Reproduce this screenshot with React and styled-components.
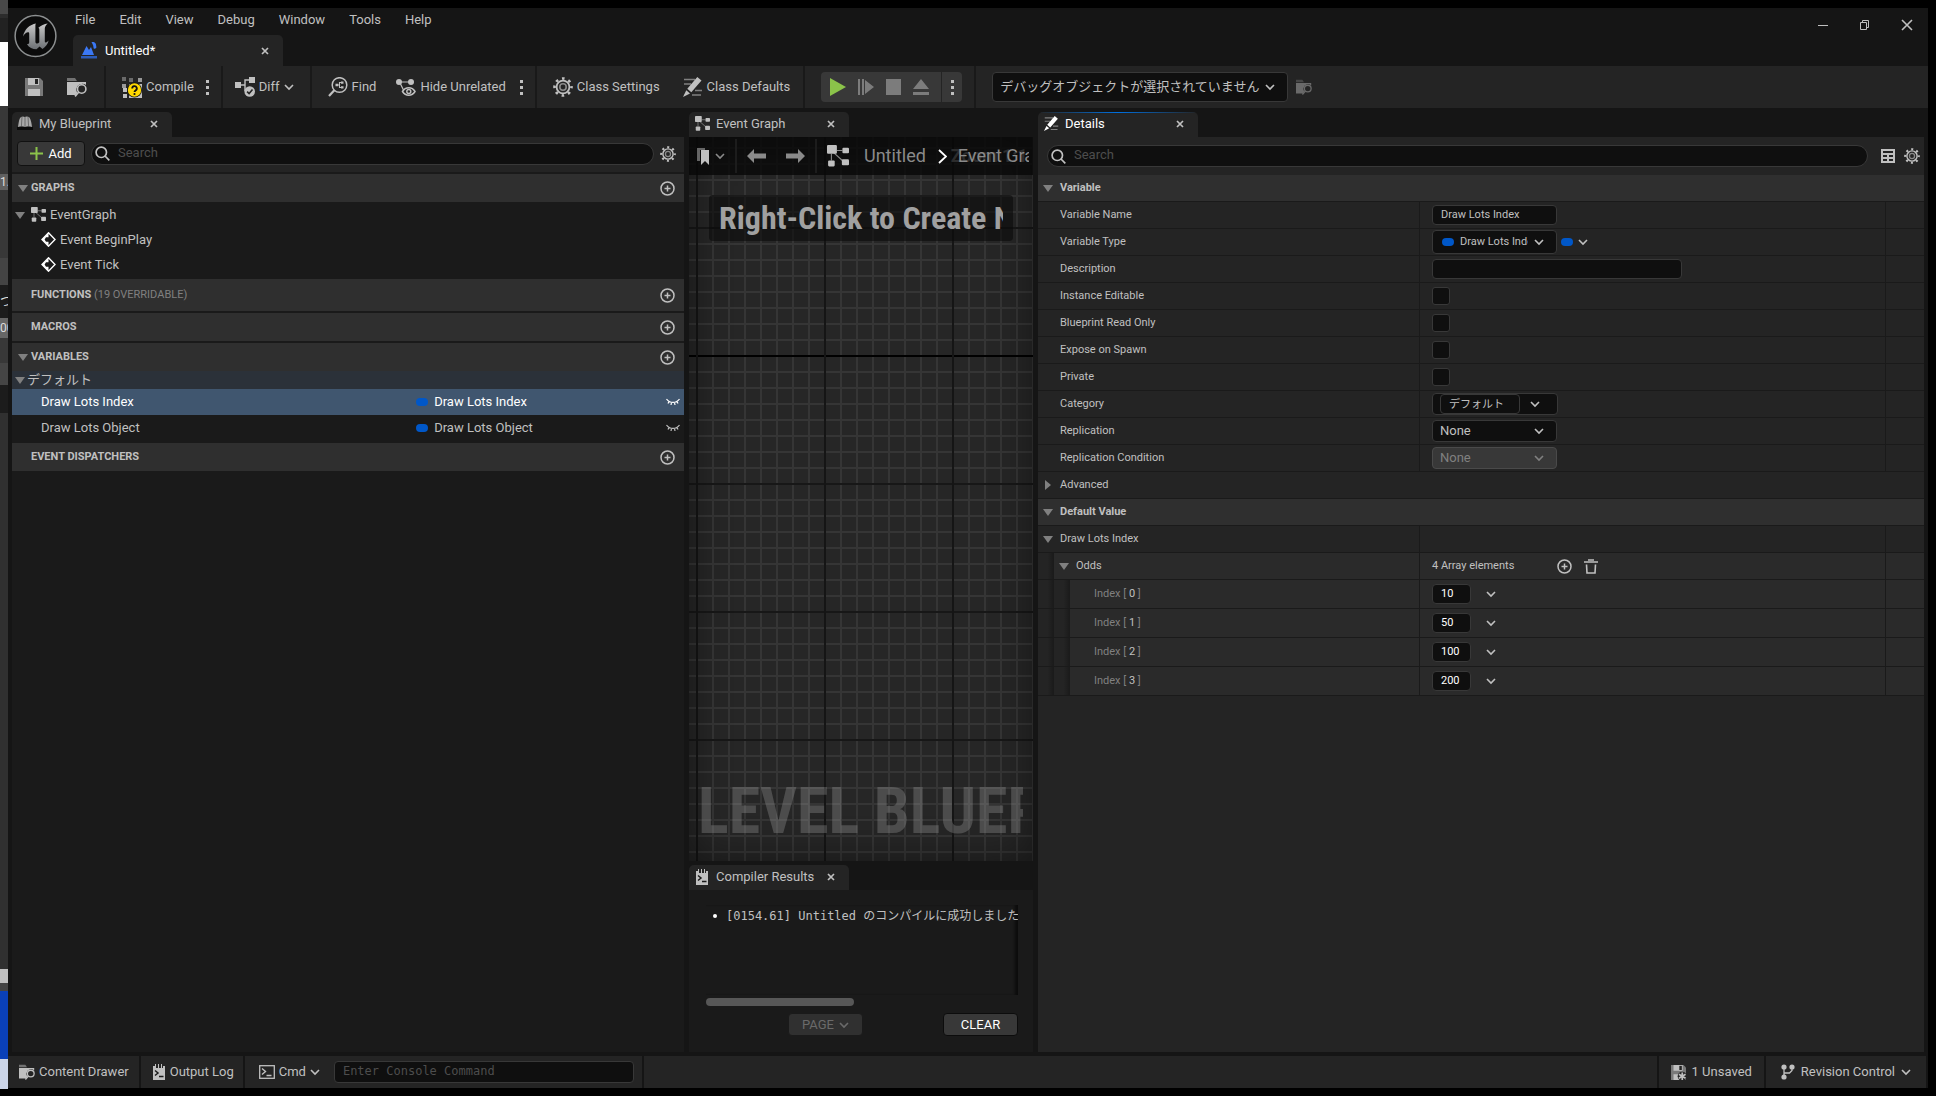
import React from 'react';
import styled, { createGlobalStyle, css } from 'styled-components';

const GlobalStyle = createGlobalStyle`
  * {
    box-sizing: border-box;
  }

  body {
    margin: 0;
    background: #000;
    color: #c0c0c0;
    font-family: Roboto, "Noto Sans CJK JP", sans-serif;
    font-size: 13px;
    line-height: 16px;
  }

  button, input, select {
    font: inherit;
    color: inherit;
    margin: 0;
  }

  svg {
    display: block;
    flex: none;
  }
`;

// --- Desktop and window ---
const Desktop = styled.div`
  display: grid;
  grid-template-columns: 8px minmax(0, 1fr) 8px;
  height: 100vh;
  overflow: hidden;
`;

const BackWindow = styled.div`
  display: flex;
  flex-direction: column;
  overflow: hidden;
  margin-bottom: 7px;
`;

const BackSlice = styled.div`
  flex: ${props => (props.$grow ? '1 1 0' : `0 0 ${props.$h}px`)};
  display: flex;
  align-items: center;
  overflow: hidden;
  background: ${props => props.$bg};
  color: #ddd;
  font-size: 12px;
  white-space: nowrap;
`;

const Window = styled.div`
  display: flex;
  flex-direction: column;
  min-width: 0;
  margin: 8px 0;
  background: #151515;
`;

// --- Title bar ---
const TitleBar = styled.header`
  display: flex;
  height: 58px;
`;

const Logo = styled.div`
  width: 65px;
  padding: 6px;
`;

const TitleMain = styled.div`
  flex: 1;
  display: flex;
  flex-direction: column;
  justify-content: space-between;
`;

const MenuBar = styled.nav`
  display: flex;
  height: 24px;
  padding-left: 2px;
  gap: 24px;
`;

const PlainButton = styled.button`
  display: flex;
  align-items: center;
  padding: 0;
  border: 0;
  background: none;
  white-space: nowrap;
  gap: ${props => props.$gap || 0}px;
`;

const WindowButtons = styled.div`
  display: flex;
  align-items: flex-start;
  gap: 30px;
  padding: 11px 15px 0 0;
`;

// --- Tabs ---
const TabStrip = styled.div`
  display: flex;
  padding-top: ${props => (props.$flush ? 0 : 4)}px;
`;

const TabItem = styled.div`
  display: flex;
  align-items: center;
  gap: ${props => (props.$large ? 8 : 6)}px;
  height: ${props => (props.$large ? 31 : 25)}px;
  width: ${props => (props.$large ? 210 : 160)}px;
  padding: 0 14px ${props => (props.$large ? 0 : 2)}px ${props => (props.$large ? 8 : 5)}px;
  border-radius: 5px 5px 0 0;
  background: #242424;
  color: ${props => (props.$active ? '#fff' : '#c0c0c0')};
  ${props => props.$lit && css`
    background: linear-gradient(90deg, #242424, #0070e0 50%, #242424) top / 100% 1px no-repeat, #242424;
  `}
`;

const TabIcon = styled.i`
  display: flex;
  justify-content: center;
  width: 16px;
`;

const TabTitle = styled.span`
  flex: 1;
  white-space: nowrap;
`;

// --- Main toolbar ---
const Toolbar = styled.div`
  display: flex;
  align-items: center;
  height: 42px;
  background: #242424;
`;

const ToolGroup = styled.div`
  display: flex;
  align-items: center;
  align-self: stretch;
  gap: ${props => props.$gap || 0}px;
  padding: 0 ${props => props.$right || 12}px 0 ${props => props.$left || 16}px;
  border-right: 2px solid ${props => (props.$last ? 'transparent' : '#191919')};
`;

const ToolPair = styled.div`
  display: flex;
  align-items: center;
  gap: ${props => props.$gap}px;
`;

const PlayGroup = styled.div`
  display: flex;
  align-items: center;
  gap: 12px;
  height: 30px;
  padding: 0 8px;
  border-radius: 4px;
  background: #383838;
`;

const PlayMore = styled(PlainButton)`
  align-self: stretch;
  padding-left: 8px;
  border-left: 1px solid #242424;
`;

const SelectBox = styled.div`
  display: grid;
  grid-template-columns: minmax(0, 1fr) 10px;
  align-items: center;
  width: ${props => props.$w}px;
  height: ${props => props.$h}px;
  padding-right: 12px;
  border: 1px solid ${props => (props.$disabled ? '#4a4a4a' : '#383838')};
  border-radius: 4px;
  background: ${props => (props.$disabled ? '#383838' : '#0f0f0f')};
  color: ${props => (props.$disabled ? '#808080' : '#c0c0c0')};
  font-size: 13px;

  select {
    grid-area: 1 / 1 / 2 / 3;
    width: 100%;
    height: 100%;
    padding: 0 12px 0 7px;
    border: 0;
    background: none;
    appearance: none;
    opacity: 1;
  }

  svg {
    grid-area: 1 / 2;
    pointer-events: none;
  }
`;

// --- Panels ---
const Workspace = styled.main`
  flex: 1;
  display: grid;
  grid-template-columns: 672fr 344fr 886fr;
  gap: 5px;
  min-height: 0;
  padding: 0 4px;
`;

const Panel = styled.section`
  display: flex;
  flex-direction: column;
  min-width: 0;
  min-height: 0;
`;

const PanelBody = styled.div`
  flex: 1;
  min-height: 0;
  overflow: hidden;
  background: ${props => props.$bg || '#1a1a1a'};
`;

const PanelTools = styled.div`
  display: flex;
  align-items: center;
  gap: ${props => props.$gap}px;
  height: ${props => props.$h}px;
  padding: ${props => props.$pad};
  background: #242424;
`;

const AddButton = styled.button`
  display: flex;
  align-items: center;
  justify-content: center;
  gap: 5px;
  width: 68px;
  height: 25px;
  border: 1px solid #111;
  border-radius: 4px;
  background: #383838;
  color: #fff;
`;

const SearchBox = styled.label`
  flex: 1;
  display: flex;
  align-items: center;
  gap: 8px;
  height: 22px;
  padding: 0 3px;
  border: 1px solid #383838;
  border-radius: 11px;
  background: #0f0f0f;

  input {
    flex: 1;
    min-width: 0;
    padding: 0 0 2px;
    border: 0;
    outline: 0;
    background: none;
  }

  input::placeholder {
    color: #4d4d4d;
    opacity: 1;
  }
`;

// --- My Blueprint ---
const SectionHeader = styled.div`
  display: flex;
  align-items: center;
  height: ${props => (props.$tall ? 34 : 30)}px;
  padding: 0 9px 0 4px;
  border-top: 2px solid #1a1a1a;
  background: #2f2f2f;
  font-size: 11px;
  font-weight: 700;

  h2 {
    flex: 1;
    margin: 0;
    padding: 0 0 1px 1px;
    font: inherit;
  }

  small {
    color: #808080;
    font-size: 11px;
    font-weight: 400;
  }
`;

const ArrowSlot = styled.span`
  display: flex;
  justify-content: center;
  width: 14px;
`;

const TreeRow = styled.div`
  display: flex;
  align-items: center;
  gap: 4px;
  height: 25px;
  padding-left: ${props => (props.$child ? 29 : 1)}px;
`;

const CategoryRow = styled.div`
  display: flex;
  align-items: center;
  height: 18px;
  padding-left: 1px;
  background: #2b3139;
`;

const VariableRow = styled.div`
  display: grid;
  grid-template-columns: 60% minmax(0, 1fr) 18px;
  align-items: center;
  height: 26px;
  background: ${props => (props.$selected ? '#40566f' : 'transparent')};
  color: ${props => (props.$selected ? '#fff' : '#c0c0c0')};

  > span:first-child {
    padding-left: 29px;
  }
`;

const TypeCell = styled.span`
  display: flex;
  align-items: center;
  gap: 6px;
  padding-left: 1px;
`;

const Pill = styled.i`
  flex: none;
  width: 12px;
  height: 8px;
  border-radius: 4px;
  background: #0057c8;
`;

// --- Event graph ---
const Graph = styled.div`
  flex: 1;
  display: flex;
  flex-direction: column;
  justify-content: space-between;
  min-height: 0;
  overflow: hidden;
  background:
    repeating-linear-gradient(90deg, transparent 0 7px, #151515 7px 9px, transparent 9px 128px),
    linear-gradient(#000, #000) 0 218px / 100% 2px no-repeat,
    repeating-linear-gradient(transparent 0 90px, #171717 90px 92px, transparent 92px 128px),
    repeating-linear-gradient(90deg, transparent 0 7px, #353535 7px 9px, transparent 9px 16px),
    repeating-linear-gradient(transparent 0 10px, #353535 10px 12px, transparent 12px 16px),
    #262626;
  box-shadow: inset 0 0 40px rgba(0, 0, 0, 0.45);
`;

const GraphBar = styled.div`
  display: flex;
  align-items: center;
  height: 38px;
  padding: 0 4px 0 8px;
  background: rgba(8, 8, 8, 0.8);
  color: #8a8a8a;
  overflow: hidden;
`;

const GraphDivider = styled.i`
  flex: none;
  width: 2px;
  height: 34px;
  margin: 0 10px;
  background: #1c1c1c;
`;

const Crumbs = styled.div`
  display: flex;
  align-items: center;
  flex: 1;
  min-width: 0;
  margin-left: 15px;
  overflow: hidden;
  font-size: 18px;
  line-height: 24px;
  white-space: nowrap;

  > svg {
    margin: 0 4px 0 12px;
    color: #fff;
  }
`;

const CrumbEnd = styled.div`
  display: grid;
  flex: 1;
  min-width: 0;
  overflow: hidden;

  > * {
    grid-area: 1 / 1;
  }

  > :first-child {
    color: #2c2c2c;
  }

  > :last-child {
    padding-left: 7px;
  }
`;

const Hint = styled.p`
  margin: 20px 20px auto;
  padding: 0 10px;
  border-radius: 4px;
  background: rgba(10, 10, 10, 0.6);

  span {
    display: block;
    overflow: hidden;
    color: #a0a0a0;
    font: 700 32px/46px "Roboto Condensed", "Liberation Sans Narrow", Roboto, sans-serif;
    white-space: nowrap;
  }
`;

const Watermark = styled.p`
  margin: 0 10px 11px 9px;
  overflow: hidden;
  color: rgba(160, 160, 160, 0.32);
  font: 700 64px/76px "Roboto Condensed", "Liberation Sans Narrow", Roboto, sans-serif;
  white-space: nowrap;
`;

// --- Compiler results ---
const Results = styled.div`
  display: flex;
  flex-direction: column;
  height: 162px;
  padding: 15px 15px 16px 17px;
  background: #1a1a1a;
`;

const Log = styled.ul`
  flex: 1;
  margin: 0;
  padding: 3px 0 0 7px;
  overflow: hidden;
  list-style: none;
  box-shadow: inset -4px 0 3px -1px #0c0c0c;
  font-family: "DejaVu Sans Mono", "Noto Sans CJK JP", monospace;
  font-size: 12px;
  white-space: nowrap;

  li {
    display: flex;
    align-items: center;
    gap: 9px;
  }

  li::before {
    content: '';
    flex: none;
    width: 4px;
    height: 4px;
    border-radius: 2px;
    background: #fff;
  }
`;

const ScrollThumb = styled.div`
  width: 148px;
  height: 8px;
  margin: 3px 0 7px;
  border-radius: 4px;
  background: #575757;
`;

const ResultActions = styled.div`
  display: flex;
  justify-content: space-between;
  padding-left: 82px;
`;

const ActionButton = styled.button`
  display: flex;
  align-items: center;
  justify-content: center;
  gap: 5px;
  width: 75px;
  height: 23px;
  padding: 0;
  border: 1px solid ${props => (props.disabled ? '#1a1a1a' : '#0c0c0c')};
  border-radius: 4px;
  background: ${props => (props.disabled ? '#303030' : '#383838')};
  color: ${props => (props.disabled ? '#6a6a6a' : '#fff')};
`;

// --- Details ---
const PropertyHeader = styled.h2`
  display: flex;
  align-items: center;
  gap: 7px;
  height: 27px;
  margin: 0;
  padding-left: 5px;
  border-bottom: 1px solid #1a1a1a;
  background: ${props => (props.$plain ? '#242424' : '#2f2f2f')};
  font-size: 11px;
  font-weight: ${props => (props.$plain ? 400 : 700)};
`;

const PropertyRow = styled.div`
  display: grid;
  grid-template-columns: 43% minmax(0, 1fr) 39px;
  height: ${props => (props.$tall ? 29 : 27)}px;
  border-bottom: 1px solid #1a1a1a;
  background: ${props => (props.$depth ? '#2a2a2a' : '#242424')};
  font-size: 11px;
`;

const NameCell = styled.div`
  display: flex;
  align-items: center;
  gap: 7px;
  padding-left: ${props => (props.$open ? 5 : 22)}px;
`;

const Nested = styled(NameCell)`
  padding-left: 0;

  em {
    color: #808080;
    font-style: normal;
  }
`;

const Indent = styled.i`
  align-self: stretch;
  width: 16px;
  margin-right: ${props => (props.$leaf ? 17 : -2)}px;
  background: linear-gradient(90deg, #242424 60%, #1a1a1a);

  & + & {
    margin-left: -5px;
  }
`;

const ValueCell = styled.div`
  display: flex;
  align-items: center;
  gap: ${props => props.$gap || 4}px;
  padding-left: 12px;
  border-left: 1px solid #1a1a1a;
`;

const EndCell = styled.div`
  border-left: 1px solid #1a1a1a;
`;

const TextField = styled.input`
  width: ${props => props.$w}px;
  height: 20px;
  padding: 0 7px 2px 8px;
  border: 1px solid #383838;
  border-radius: 4px;
  outline: 0;
  background: #0f0f0f;
  color: ${props => (props.$bright ? '#fff' : '#c0c0c0')};
`;

const CheckBox = styled.input`
  appearance: none;
  width: 18px;
  height: 18px;
  border: 1px solid #383838;
  border-radius: 3px;
  background: #0f0f0f;
`;

const TypeButton = styled.button`
  display: flex;
  align-items: center;
  gap: 6px;
  width: 125px;
  height: 24px;
  padding: 0 12px 0 9px;
  border: 1px solid #383838;
  border-radius: 4px;
  background: #0f0f0f;

  span {
    flex: 1;
    overflow: hidden;
    text-align: left;
    white-space: nowrap;
  }
`;

const ComboBox = styled.div`
  display: flex;
  align-items: center;
  gap: 10px;
  width: 126px;
  height: 22px;
  padding-left: 7px;
  border: 1px solid #383838;
  border-radius: 4px;
  background: #0f0f0f;
`;

const ArrayCount = styled.span`
  width: 113px;
`;

// --- Status bar ---
const StatusBar = styled.footer`
  display: flex;
  height: 32px;
  margin-top: 4px;
  background: #242424;
`;

const StatusItem = styled.div`
  display: flex;
  align-items: center;
  gap: 14px;
  padding: 0 ${props => props.$right || 10}px 0 ${props => props.$left || 10}px;
  border-right: 2px solid #151515;
`;

const Spacer = styled.div`
  flex: 1;
  border-right: 2px solid #151515;
`;

const ConsoleInput = styled.input`
  width: 300px;
  height: 22px;
  padding: 0 8px 3px;
  border: 1px solid #383838;
  border-radius: 4px;
  outline: 0;
  background: #0f0f0f;
  font-family: "DejaVu Sans Mono", monospace;
  font-size: 12px;

  &::placeholder {
    color: #4d4d4d;
    opacity: 1;
  }
`;

// --- Icons ---
const Icon = ({ w = 16, h = w, box = `0 0 ${w} ${h}`, children, ...rest }) => (
  <svg width={w} height={h} viewBox={box} fill="currentColor" aria-hidden="true" {...rest}>{children}</svg>
);

const Chevron = () => (
  <Icon w={10} fill="none" stroke="currentColor" strokeWidth="1.6"><path d="M1 3l4 4 4-4" /></Icon>
);

const Close = () => (
  <Icon w={8} fill="none" stroke="#c0c0c0" strokeWidth="1.7"><path d="M1 1l6 6M7 1L1 7" /></Icon>
);

const Dots = () => (
  <Icon w={4} h={16}>
    <rect x="1" y="1" width="3" height="3" />
    <rect x="1" y="7" width="3" height="3" />
    <rect x="1" y="13" width="3" height="3" />
  </Icon>
);

const Triangle = ({ closed }) => (
  <Icon w={10} color="#808080"><path d={closed ? 'M2 0l6 5-6 5z' : 'M0 2h10L5 9z'} /></Icon>
);

const CirclePlus = () => (
  <Icon w={15} fill="none" stroke="currentColor" strokeWidth="1.5">
    <circle cx="7.5" cy="7.5" r="6.5" />
    <path d="M7.5 4.5v6M4.5 7.5h6" />
  </Icon>
);

const SearchIcon = () => (
  <Icon w={15} fill="none" stroke="currentColor" strokeWidth="1.7">
    <circle cx="6.3" cy="6.3" r="5.2" />
    <path d="M10 10l4.3 4.3" />
  </Icon>
);

const Gear = ({ size = 16 }) => (
  <Icon w={size} box="0 0 20 20" fill="none" stroke="currentColor">
    <circle cx="10" cy="10" r="6.4" strokeWidth="1.8" />
    <circle cx="10" cy="10" r="3.2" strokeWidth="1.6" opacity="0.65" />
    <circle cx="10" cy="10" r="8.5" strokeWidth="2.6" strokeDasharray="2.6 4.076" strokeDashoffset="1.3" />
  </Icon>
);

const SaveIcon = ({ size = 18, star }) => (
  <Icon w={size} box="0 0 18 18">
    <path d="M0 0h15l3 3v15H0z" opacity="0.55" />
    <path d="M3 0h11v7H3zM3 11h12v7H3z" />
    <rect x="10" y="1" width="3" height="5" fill="#242424" />
    {star && (
      <g>
        <circle cx="13.5" cy="13.5" r="5.5" fill="#242424" />
        <path d="M13.5 9v9M9.5 11.2l8 4.6M17.5 11.2l-8 4.6" stroke="currentColor" strokeWidth="2" />
      </g>
    )}
  </Icon>
);

const BrowseIcon = ({ size = 20, ...rest }) => (
  <Icon w={size} box="0 0 20 20" {...rest}>
    <path d="M0 1h8l2 3H0z" opacity="0.5" />
    <path d="M0 5h19v3a6 6 0 0 0-8.6 8L8.5 18H0z" />
    <circle cx="14.7" cy="12" r="5" fill="#242424" />
    <circle cx="14.7" cy="12" r="4.2" fill="none" stroke="currentColor" strokeWidth="1.6" />
    <path d="M11.8 15L8 19.4" stroke="currentColor" strokeWidth="1.7" />
  </Icon>
);

const CompileIcon = () => (
  <Icon w={20} h={21}>
    <path d="M0 0h4v4H0zM7 1h4v4H7z" opacity="0.45" />
    <path d="M16 1h4v4h-4zM0 7h4v4H0z" opacity="0.75" />
    <path d="M1 11h4v4H1zM1 17h4v4H1zM7 7h13v14H7z" />
    <circle cx="12.5" cy="13" r="7.5" fill="#111" />
    <circle cx="12.5" cy="13" r="6.7" fill="#ffd800" />
    <path d="M10.2 11.4a2.3 2.3 0 1 1 3.4 2c-.8.5-1.1.8-1.1 1.6" fill="none" stroke="#111" strokeWidth="1.8" />
    <circle cx="12.5" cy="17" r="1.1" fill="#111" />
  </Icon>
);

const DiffIcon = () => (
  <Icon w={20}>
    <path d="M0 5h6v6H0zM14 0h6v6h-6z" />
    <path d="M6 8h4M10 14V3h4" fill="none" stroke="currentColor" strokeWidth="1.4" />
    <circle cx="14.7" cy="14.5" r="5.3" />
    <path d="M12.1 14.6l2 2 3.4-4" fill="none" stroke="#242424" strokeWidth="1.6" />
  </Icon>
);

const FindIcon = () => (
  <Icon w={20} fill="none" stroke="currentColor" strokeWidth="1.5">
    <circle cx="11.5" cy="8" r="7.3" />
    <path d="M6.3 13.2L1 19" strokeWidth="2.2" />
    <path d="M9 8h2M15 5.5h-3.5v5H15" strokeWidth="1.1" />
    <path d="M7.5 6.7h2.6v2.6H7.5zM13 4.5h2.5v2.2H13zM13 9.3h2.5v2.2H13z" fill="currentColor" stroke="none" />
  </Icon>
);

const HideIcon = () => (
  <Icon w={20} h={19}>
    <circle cx="3" cy="4" r="3" />
    <circle cx="15" cy="4" r="3" />
    <path d="M3 4h12M4 5l4 8" fill="none" stroke="currentColor" strokeWidth="1.2" />
    <path d="M6.5 13.5c3-5 9.5-5 12.5 0-3 5-9.5 5-12.5 0z" fill="#242424" stroke="currentColor" strokeWidth="1.5" />
    <circle cx="12.8" cy="13.5" r="2" fill="none" stroke="currentColor" strokeWidth="1.4" />
  </Icon>
);

const PencilIcon = ({ size = 20, white }) => (
  <Icon w={size} box="0 0 20 20">
    <path d="M1 2.5h11M1 7h7M12 13.5h7M9 18h9" stroke="#808080" strokeWidth="1.6" />
    <path
      d="M14.3 0l4.2 3.6L8.3 15.3l-4-3.5zM3.3 13.2l3.7 3.2L0 20z"
      fill={white ? '#fff' : 'currentColor'}
    />
  </Icon>
);

const GraphIcon = ({ size = 15, ...rest }) => (
  <Icon w={size} box="0 0 20 20" {...rest}>
    <rect width="9" height="8" rx="1" />
    <rect x="14" y="2.5" width="6" height="5" rx="1" />
    <rect x="1" y="14" width="6" height="5.5" rx="1" />
    <rect x="13.5" y="13" width="6.5" height="5.5" rx="1" />
    <path d="M9 5h5M4 8v6M6 7l9 8" fill="none" stroke="currentColor" opacity="0.7" />
  </Icon>
);

const LevelIcon = () => (
  <Icon w={16} h={17}>
    <path d="M0 14h16v2.5H0z" fill="#2d5cb8" />
    <path d="M1 13L5.5 4 8 8l2-3 3 8z" fill="#3b78f5" />
    <path d="M10.5 0c3-.6 5 1.3 4.6 4 1 1.7-.6 3.4-2.4 2.6l-.6-3.3z" fill="#3b78f5" />
  </Icon>
);

const BookIcon = () => (
  <Icon w={16} h={15}>
    <path d="M1 11C2 5 2 3 4 1c1.5-.8 2.5-.8 3.7 0C9 .2 11 .2 12.5 1.5 14 4 14.5 7 15 11c-2.500-1-5-1-7 0-2-1-4.500-1-7 0z" fill="#a8a8a8" />
    <path d="M8 1v10M5 1L4.4 10M11 1l.6 9" stroke="#6c6c6c" />
    <path d="M0 12.5h16" stroke="#0b0b0b" strokeWidth="3" />
  </Icon>
);

const LogIcon = () => (
  <Icon w={12} h={16}>
    <path d="M0 2h2V0h1v4h2V0h1v4h2V0h1v4h1V2h2v14H0z" />
    <path d="M2 6.5L5 9l-3 2.5M6 12.5h4.5" fill="none" stroke="#1a1a1a" strokeWidth="1.5" />
  </Icon>
);

const CmdIcon = () => (
  <Icon w={16} h={14} fill="none" stroke="currentColor">
    <rect x="0.7" y="0.7" width="14.6" height="12.6" strokeWidth="1.3" />
    <path d="M3 3.5l3.5 3L3 9.5M7.5 10.5h5" strokeWidth="1.4" />
  </Icon>
);

const EventIcon = () => (
  <Icon w={15}>
    <path d="M7.5.8L14 7.5l-6.500 6.700L1 7.500z" fill="none" stroke="#fff" strokeWidth="1.4" />
    <path d="M7.5 1v4.2H5L3.6 7.5 5 9.800h2.500V14L1 7.500z" fill="#fff" />
  </Icon>
);

const EyeClosed = () => (
  <Icon w={14} h={8} fill="none" stroke="currentColor" strokeWidth="1.2">
    <path d="M.5 1c3 4.5 10 4.5 13 0M3 3.5L2 5.5M5.5 4.5L5 7M8.5 4.5L9 7M11 3.5l1 2" />
  </Icon>
);

const Arrow = ({ right }) => (
  <Icon w={19} h={14}>
    <path d={right ? 'M12 0l7 7-7 7V9.5H0v-5h12z' : 'M7 0L0 7l7 7V9.5h12v-5H7z'} />
  </Icon>
);

const Emblem = () => (
  <Icon w={43} h={44}>
    <defs>
      <linearGradient id="metal" x1="0" y1="0" x2="0" y2="1">
        <stop offset="0" stopColor="#c8c8c8" />
        <stop offset="1" stopColor="#6c7074" />
      </linearGradient>
    </defs>
    <circle cx="21.5" cy="22" r="20.4" fill="#0b0b0b" stroke="#8c8f90" strokeWidth="1.5" />
    <path
      d="M22 9.5C16 10.5 10.5 15 9 22.5c1.800-3 3.500-4.200 5-4.200.8 0 1.200.5 1.200 1.400v8.800c0 1-.8 1.600-2.200 1.700 2 3.300 5.500 5.100 9.500 5.100l3.100-2.900 2.900 2.600c3-2 5.500-5 6.100-8.400-1.400 1.400-2.400 2-3 2-.5 0-.8-.4-.8-1.100v-13c0-1.800 1.400-3.600 3-5-3.600.6-7 2-9.400 4.300.6.4.9.9.9 1.700v12.800c-.6.800-1.400 1.200-2.200 1.200-1.100 0-1.700-.6-1.700-1.800V12.500c0-1.300 0-2.300.6-3z"
      fill="url(#metal)"
    />
  </Icon>
);

const flags = ['Instance Editable', 'Blueprint Read Only', 'Expose on Spawn', 'Private'];
const menus = ['File', 'Edit', 'View', 'Debug', 'Window', 'Tools', 'Help'];
const variables = ['Draw Lots Index', 'Draw Lots Object'];
const odds = [10, 50, 100, 200];

// Sliver of the level editor that shows at the left of the window
const backSlices = [
  { h: 14, bg: '#484848' },
  { h: 4, bg: '#2c2c2c' },
  { h: 24, bg: '#222' },
  { h: 64, bg: '#fff' },
  { h: 68, bg: '#383838' },
  { h: 16, bg: '#606060', text: '1.0' },
  { h: 68, bg: '#383838' },
  { h: 27, bg: '#444' },
  { h: 33, bg: '#1c1c1c', text: 'つ' },
  { h: 20, bg: '#666', text: '00' },
  { h: 25, bg: '#383838' },
  { h: 22, bg: '#454545' },
  { h: 28, bg: '#1c1c1c' },
  { grow: true, bg: '#303030' },
  { h: 14, bg: '#c0c0c0' },
  { h: 8, bg: '#444' },
  { h: 68, bg: '#0a40b8' },
  { h: 30, bg: '#ccd5e8' },
];

const Tab = ({ icon, title, ...rest }) => (
  <TabItem {...rest}>
    <TabIcon>{icon}</TabIcon>
    <TabTitle>{title}</TabTitle>
    <PlainButton aria-label={`Close ${title}`}><Close /></PlainButton>
  </TabItem>
);

const Section = ({ title, note, open, tall }) => (
  <SectionHeader $tall={tall}>
    <ArrowSlot>{open && <Triangle />}</ArrowSlot>
    <h2>{title} {note && <small>{note}</small>}</h2>
    <PlainButton aria-label={`Add to ${title}`}><CirclePlus /></PlainButton>
  </SectionHeader>
);

const Property = ({ name, id, children }) => (
  <PropertyRow>
    <NameCell><label htmlFor={id}>{name}</label></NameCell>
    <ValueCell>{children}</ValueCell>
    <EndCell />
  </PropertyRow>
);

const MainToolbar = () => (
  <Toolbar>
    <ToolGroup $gap={24} $left={17} $right={17}>
      <PlainButton aria-label="Save"><SaveIcon /></PlainButton>
      <PlainButton aria-label="Browse"><BrowseIcon /></PlainButton>
    </ToolGroup>
    <ToolGroup $gap={11}>
      <PlainButton $gap={4}><CompileIcon />Compile</PlainButton>
      <PlainButton aria-label="Compile options"><Dots /></PlainButton>
    </ToolGroup>
    <ToolGroup $left={12} $right={16}>
      <PlainButton $gap={4}><DiffIcon />Diff<Chevron /></PlainButton>
    </ToolGroup>
    <ToolGroup $gap={20}>
      <PlainButton $gap={4}><FindIcon />Find</PlainButton>
      <ToolPair $gap={13}>
        <PlainButton $gap={4}><HideIcon />Hide Unrelated</PlainButton>
        <PlainButton aria-label="Hide options"><Dots /></PlainButton>
      </ToolPair>
    </ToolGroup>
    <ToolGroup $gap={23} $right={13}>
      <PlainButton $gap={4}><Gear size={20} />Class Settings</PlainButton>
      <PlainButton $gap={4}><PencilIcon />Class Defaults</PlainButton>
    </ToolGroup>
    <ToolGroup>
      <PlayGroup>
        <PlainButton aria-label="Play"><Icon w={17} h={18}><path d="M1 0l16 9-16 9z" fill="#8bc34a" /></Icon></PlainButton>
        <PlainButton aria-label="Step"><Icon w={16} color="#7c7c7c"><path d="M0 0h2v16H0zM4 0h2v16H4zM7 1l9 7-9 7z" /></Icon></PlainButton>
        <PlainButton aria-label="Stop"><Icon w={15} h={16} color="#7c7c7c"><path d="M0 0h15v16H0z" /></Icon></PlainButton>
        <PlainButton aria-label="Eject"><Icon w={16} color="#7c7c7c"><path d="M8 0l8 10H0zM0 13h16v3H0z" /></Icon></PlainButton>
        <PlayMore aria-label="Play options"><Dots /></PlayMore>
      </PlayGroup>
    </ToolGroup>
    <ToolGroup $gap={8} $last>
      <SelectBox $w={296} $h={30}>
        <select aria-label="Debug object"><option>デバッグオブジェクトが選択されていません</option></select>
        <Chevron />
      </SelectBox>
      <PlainButton aria-label="Browse debug object"><BrowseIcon size={16} color="#6a6a6a" /></PlainButton>
    </ToolGroup>
  </Toolbar>
);

const BlueprintPanel = () => (
  <Panel>
    <TabStrip><Tab icon={<BookIcon />} title="My Blueprint" /></TabStrip>
    <PanelTools $h={35} $gap={6} $pad="0 8px 2px 5px">
      <AddButton>
        <Icon w={13} fill="none" stroke="#8bc34a" strokeWidth="2"><path d="M6.5 0v13M0 6.5h13" /></Icon>Add
      </AddButton>
      <SearchBox><SearchIcon /><input placeholder="Search" aria-label="Search blueprint" /></SearchBox>
      <PlainButton aria-label="Blueprint settings"><Gear /></PlainButton>
    </PanelTools>
    <PanelBody>
      <Section title="GRAPHS" open />
      <TreeRow><ArrowSlot><Triangle /></ArrowSlot><GraphIcon />EventGraph</TreeRow>
      <TreeRow $child><EventIcon />Event BeginPlay</TreeRow>
      <TreeRow $child><EventIcon />Event Tick</TreeRow>
      <Section title="FUNCTIONS" note="(19 OVERRIDABLE)" tall />
      <Section title="MACROS" />
      <Section title="VARIABLES" open />
      <CategoryRow><ArrowSlot><Triangle /></ArrowSlot>デフォルト</CategoryRow>
      {variables.map((name, i) => (
        <VariableRow key={name} $selected={i === 0}>
          <span>{name}</span>
          <TypeCell><Pill />{name}</TypeCell>
          <EyeClosed />
        </VariableRow>
      ))}
      <Section title="EVENT DISPATCHERS" />
    </PanelBody>
  </Panel>
);

const GraphPanel = () => (
  <Panel>
    <TabStrip><Tab icon={<GraphIcon />} title="Event Graph" /></TabStrip>
    <Graph>
      <GraphBar>
        <PlainButton $gap={6} aria-label="Bookmarks">
          <Icon w={12} h={17} color="#c0c0c0"><path d="M0 0h8v2H3v11H0z" opacity="0.5" /><path d="M4 2h8v15l-4-4-4 4z" /></Icon>
          <Chevron />
        </PlainButton>
        <GraphDivider />
        <ToolPair $gap={20}>
          <PlainButton aria-label="Back"><Arrow /></PlainButton>
          <PlainButton aria-label="Forward"><Arrow right /></PlainButton>
        </ToolPair>
        <GraphDivider />
        <GraphIcon size={22} color="#c0c0c0" />
        <Crumbs>
          <span>Untitled</span>
          <Icon w={9} h={15} fill="none" stroke="currentColor" strokeWidth="1.8"><path d="M1 1l7 6.5L1 14" /></Icon>
          <CrumbEnd><b>Zoom 1:1</b><span>Event Graph</span></CrumbEnd>
        </Crumbs>
      </GraphBar>
      <Hint><span>Right-Click to Create New Nodes</span></Hint>
      <Watermark>LEVEL BLUEPRINT</Watermark>
    </Graph>
    <TabStrip><Tab icon={<LogIcon />} title="Compiler Results" /></TabStrip>
    <Results>
      <Log><li>[0154.61] Untitled のコンパイルに成功しました</li></Log>
      <ScrollThumb />
      <ResultActions>
        <ActionButton disabled>PAGE<Chevron /></ActionButton>
        <ActionButton>CLEAR</ActionButton>
      </ResultActions>
    </Results>
  </Panel>
);

const DetailsPanel = () => (
  <Panel>
    <TabStrip><Tab icon={<PencilIcon size={15} white />} title="Details" $active $lit /></TabStrip>
    <PanelTools $h={38} $gap={13} $pad="0 4px 0 9px">
      <SearchBox><SearchIcon /><input placeholder="Search" aria-label="Search details" /></SearchBox>
      <ToolPair $gap={9}>
        <PlainButton aria-label="Property matrix">
          <Icon w={14}>
            <path d="M0 0h14v14H0zM2 2v2h10V2zM2 6v2h4V6zM8 6v2h4V6zM2 10v2h4v-2zM8 10v2h4v-2z" fillRule="evenodd" />
          </Icon>
        </PlainButton>
        <PlainButton aria-label="Details settings"><Gear /></PlainButton>
      </ToolPair>
    </PanelTools>
    <PanelBody $bg="#242424">
      <PropertyHeader><Triangle />Variable</PropertyHeader>
      <Property name="Variable Name" id="var-name">
        <TextField id="var-name" $w={125} defaultValue="Draw Lots Index" />
      </Property>
      <Property name="Variable Type" id="var-type">
        <TypeButton id="var-type"><Pill /><span>Draw Lots Index</span><Chevron /></TypeButton>
        <PlainButton $gap={5} aria-label="Container type"><Pill /><Chevron /></PlainButton>
      </Property>
      <Property name="Description" id="var-desc"><TextField id="var-desc" $w={250} /></Property>
      {flags.map(name => (
        <Property key={name} name={name} id={name}><CheckBox type="checkbox" id={name} /></Property>
      ))}
      <Property name="Category" id="var-cat">
        <ComboBox>
          <TextField id="var-cat" $w={80} defaultValue="デフォルト" />
          <PlainButton aria-label="Pick category"><Chevron /></PlainButton>
        </ComboBox>
      </Property>
      <Property name="Replication" id="var-rep">
        <SelectBox $w={125} $h={22}>
          <select id="var-rep"><option>None</option></select>
          <Chevron />
        </SelectBox>
      </Property>
      <Property name="Replication Condition" id="var-cond">
        <SelectBox $w={125} $h={22} $disabled>
          <select id="var-cond" disabled><option>None</option></select>
          <Chevron />
        </SelectBox>
      </Property>
      <PropertyHeader $plain><Triangle closed />Advanced</PropertyHeader>
      <PropertyHeader><Triangle />Default Value</PropertyHeader>
      <PropertyRow>
        <NameCell $open><Triangle />Draw Lots Index</NameCell>
        <ValueCell />
        <EndCell />
      </PropertyRow>
      <PropertyRow $depth>
        <Nested><Indent /><Triangle />Odds</Nested>
        <ValueCell $gap={12}>
          <ArrayCount>4 Array elements</ArrayCount>
          <PlainButton aria-label="Add element"><CirclePlus /></PlainButton>
          <PlainButton aria-label="Remove all elements">
            <Icon w={14} h={15} fill="none" stroke="currentColor" strokeWidth="1.6">
              <path d="M0 3h14M4 1h6M2.5 5.5l.5 8.5h8l.5-8.5" />
            </Icon>
          </PlainButton>
        </ValueCell>
        <EndCell />
      </PropertyRow>
      {odds.map((value, i) => (
        <PropertyRow key={value} $depth $tall>
          <Nested><Indent /><Indent $leaf /><label htmlFor={`odds-${i}`}><em>Index [ </em>{i}<em> ]</em></label></Nested>
          <ValueCell $gap={15}>
            <TextField id={`odds-${i}`} $w={39} $bright defaultValue={value} />
            <PlainButton aria-label={`Element ${i} options`}><Chevron /></PlainButton>
          </ValueCell>
          <EndCell />
        </PropertyRow>
      ))}
    </PanelBody>
  </Panel>
);

const App = () => (
  <>
    <GlobalStyle />
    <Desktop>
      <BackWindow>
        {backSlices.map((slice, i) => (
          <BackSlice key={i} $h={slice.h} $bg={slice.bg} $grow={slice.grow}>{slice.text}</BackSlice>
        ))}
      </BackWindow>
      <Window>
        <TitleBar>
          <Logo><Emblem /></Logo>
          <TitleMain>
            <MenuBar>{menus.map(name => <PlainButton key={name}>{name}</PlainButton>)}</MenuBar>
            <TabStrip $flush><Tab icon={<LevelIcon />} title="Untitled*" $large $active /></TabStrip>
          </TitleMain>
          <WindowButtons>
            <PlainButton aria-label="Minimize"><Icon w={12}><path d="M1 6h10v1H1z" /></Icon></PlainButton>
            <PlainButton aria-label="Restore">
              <Icon w={12} fill="none" stroke="currentColor"><path d="M1.5 3.5h6v7h-6zM3.5 3V1.5h6v7H8" /></Icon>
            </PlainButton>
            <PlainButton aria-label="Close">
              <Icon w={12} fill="none" stroke="currentColor" strokeWidth="1.6"><path d="M1 1l10 10M11 1L1 11" /></Icon>
            </PlainButton>
          </WindowButtons>
        </TitleBar>
        <MainToolbar />
        <Workspace>
          <BlueprintPanel />
          <GraphPanel />
          <DetailsPanel />
        </Workspace>
        <StatusBar>
          <StatusItem $left={11}><PlainButton $gap={4}><BrowseIcon size={16} />Content Drawer</PlainButton></StatusItem>
          <StatusItem $left={12} $right={9}><PlainButton $gap={5}><LogIcon />Output Log</PlainButton></StatusItem>
          <StatusItem $left={14} $right={8}>
            <PlainButton $gap={4}><CmdIcon />Cmd<Chevron /></PlainButton>
            <ConsoleInput placeholder="Enter Console Command" aria-label="Console command" />
          </StatusItem>
          <Spacer />
          <StatusItem $left={12} $right={12}><PlainButton $gap={6}><SaveIcon size={15} star />1 Unsaved</PlainButton></StatusItem>
          <StatusItem $left={15} $right={15}>
            <PlainButton $gap={6}>
              <Icon w={14} h={16}>
                <circle cx="3" cy="3" r="2.6" />
                <circle cx="11" cy="3" r="2.6" />
                <circle cx="3" cy="13" r="2.6" />
                <path d="M3 3v10M3 9h5.5L11 6.5V3" fill="none" stroke="currentColor" strokeWidth="1.3" />
              </Icon>
              Revision Control<Chevron />
            </PlainButton>
          </StatusItem>
        </StatusBar>
      </Window>
    </Desktop>
  </>
);

export default App;
